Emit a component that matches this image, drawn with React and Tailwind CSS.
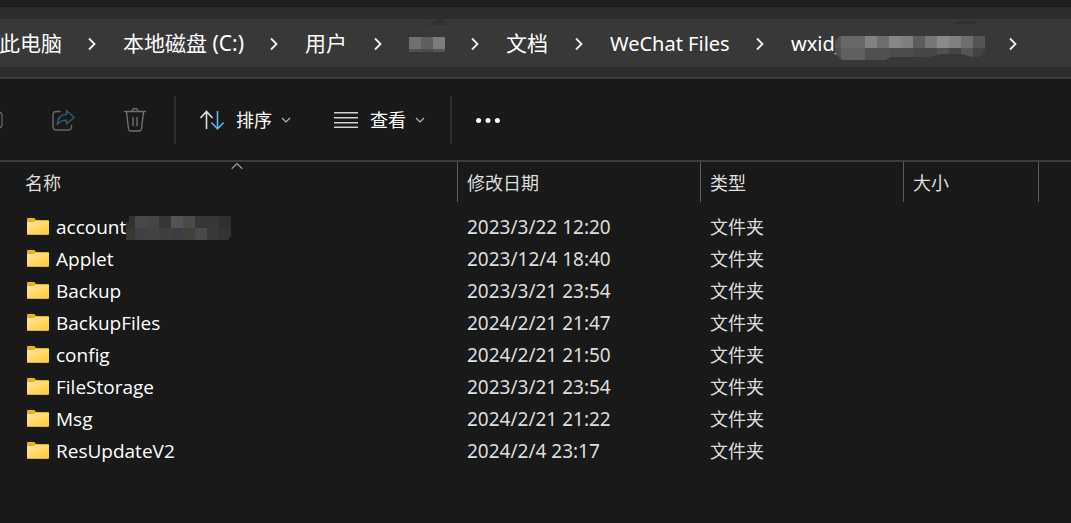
import React from "react";

const folders = [
  { name: "account", date: "2023/3/22 12:20", masked: true },
  { name: "Applet", date: "2023/12/4 18:40" },
  { name: "Backup", date: "2023/3/21 23:54" },
  { name: "BackupFiles", date: "2024/2/21 21:47" },
  { name: "config", date: "2024/2/21 21:50" },
  { name: "FileStorage", date: "2023/3/21 23:54" },
  { name: "Msg", date: "2024/2/21 21:22" },
  { name: "ResUpdateV2", date: "2024/2/4 23:17" },
];

const Mosaic = ({ rows, size = 12, lastHeight = 12, clip, className, children }) => {
  const width = rows[0].length * size;
  const height = (rows.length - 1) * size + lastHeight;
  return (
    <svg
      width={width}
      height={height}
      viewBox={`0 0 ${width} ${height}`}
      shapeRendering="crispEdges"
      aria-hidden="true"
      className={className}
    >
      {children}
      <g style={{ clipPath: clip }}>
        {rows.map((row, y) =>
          row.map((color, x) => (
            <rect
              key={`${x}-${y}`}
              x={x * size}
              y={y * size}
              width={size}
              height={y === rows.length - 1 ? lastHeight : size}
              fill={color}
            />
          ))
        )}
      </g>
    </svg>
  );
};

const UserMask = () => (
  <Mosaic
    className="overflow-visible"
    rows={[
      ["#707070", "#5f5f5f", "#7c7c7c"],
      ["#505050", "#4b4b4b", "#555555"],
    ]}
    lastHeight={3}
  >
    <path d="M17-12l7-3 5-3h5l5 6z" fill="#313131" />
  </Mosaic>
);

const WxidMask = () => (
  <Mosaic
    className="-ml-[15px] mt-2 shrink-0 overflow-visible"
    rows={[
      ["#555555", "#686868", "#686868", "#828282", "#6e6e6e", "#868686", "#7f7f7f", "#5c5c5c", "#777777", "#8a8a8a", "#808080", "#6e6e6e", "#555555"],
      ["#4d4d4d", "#606060", "#606060", "#505050", "#505050", "#4c4c4c", "#4c4c4c", "#474747", "#474747", "#505050", "#444444", "#555555", "#444444"],
    ]}
    clip="polygon(10px 0, 156px 0, 156px 15px, 150px 21px, 144px 21px, 132px 18px, 112px 18px, 100px 21px, 62px 21px, 56px 24px, 13px 24px, 6px 17px, 6px 6px)"
  >
    <path d="M120-12l6-1 2-2h17l4 3z" fill="#313131" />
  </Mosaic>
);

const AccountMask = () => (
  <Mosaic
    className="-ml-[3px] mt-0.5 shrink-0"
    rows={[
      ["#33302e", "#48484a", "#444546", "#383737", "#545456", "#4b4a4b", "#343639", "#373739", "#302e2e"],
      ["#383532", "#414143", "#434142", "#403e3f", "#3a3e43", "#42403c", "#49494c", "#37383a", "#363332"],
    ]}
    clip="polygon(6px 0, 108px 0, 108px 20px, 105px 24px, 3px 24px, 3px 6px, 6px 6px)"
  />
);

const Chevron = () => (
  <svg
    width="60"
    height="16"
    viewBox="0 0 60 16"
    fill="none"
    stroke="#f2f2f2"
    strokeWidth="1.8"
    className="mr-px shrink-0"
    aria-hidden="true"
  >
    <path d="M27 2.5l5.5 5.5L27 13.5" />
  </svg>
);

const SmallChevron = () => (
  <svg width="12" height="12" viewBox="0 0 12 12" fill="none" stroke="#b8b8b8" strokeWidth="1.2" className="ml-2" aria-hidden="true">
    <path d="M2 4l4 4 4-4" />
  </svg>
);

const RenameIcon = () => (
  <svg width="24" height="24" viewBox="0 0 24 24" fill="none" stroke="#666666" strokeWidth="1.3" aria-hidden="true">
    <path d="M15 4h4.5q3.5 0 3.5 3.5v9q0 3.5-3.5 3.5H15" />
  </svg>
);

const ShareIcon = () => (
  <svg width="24" height="24" viewBox="0 0 24 24" fill="none" strokeWidth="1.5" strokeLinejoin="round" strokeLinecap="round" aria-hidden="true">
    <path d="M9 3.5H5.5q-3.5 0-3.5 3.5v11.5Q2 22 5.5 22H17q3.5 0 3.5-3.5V17.500" stroke="#666666" />
    <path d="M15.5 2.5l7.500 7-7.500 6.500v-3.800c-4-.2-6.800.8-9.300 4.300.4-5.800 3.600-9.800 9.300-10.200z" stroke="#2f5a72" />
  </svg>
);

const TrashIcon = () => (
  <svg width="24" height="24" viewBox="0 0 24 24" fill="none" stroke="#707070" strokeWidth="1.4" strokeLinecap="round" strokeLinejoin="round" aria-hidden="true">
    <path d="M1.5 3.5h21M3.5 3.500l2 17.500q.3 2 2.300 2h8.400q2 0 2.300-2l2-17.500M9 3.500a3 3 0 0 1 6 0M10 9.500v8M14 9.500v8" />
  </svg>
);

const SortIcon = () => (
  <svg width="24" height="24" viewBox="0 0 24 24" fill="none" strokeWidth="1.6" aria-hidden="true">
    <path d="M6.500 21V3.500M.5 10l6-6.500 6 6.500" stroke="#dedede" />
    <path d="M17.500 3v18M11.300 14.500l6.200 6.300 6.200-6.300" stroke="#55b8ee" />
  </svg>
);

const ViewIcon = () => (
  <svg width="24" height="24" viewBox="0 0 24 24" stroke="#d2d2d2" strokeWidth="1.4" aria-hidden="true">
    <path d="M0 4.700h24M0 9.700h24M0 14.700h24M0 19.300h24" />
  </svg>
);

const FolderIcon = () => (
  <svg width="24" height="20" viewBox="0 0 24 20" className="shrink-0" aria-hidden="true">
    <defs>
      <linearGradient id="folder" x1="0" y1="0" x2="1" y2="1">
        <stop offset="0" stopColor="#ffe8a3" />
        <stop offset="1" stopColor="#fdc937" />
      </linearGradient>
    </defs>
    <path d="M1 2q0-1 1-1h5.500q1 0 1.500.7L10 3H22q1 0 1 1v4H1z" fill="#f0b01e" />
    <path d="M1 5.500q0-.5.500-.5H8l1.500-1H22.500q.5 0 .5.500V17q0 1-1 1H2q-1 0-1-1z" fill="#dca73a" />
    <path d="M1 5.500q0-.5.500-.5H8l1.500-1H22.500q.5 0 .5.500v11.700q0 1-1 1H2q-1 0-1-1z" fill="url(#folder)" />
  </svg>
);

const Divider = () => <div className="h-12 w-0.5 shrink-0 bg-[#303030]" />;

const Breadcrumbs = () => (
  <nav
    aria-label="路径"
    className="flex h-12 items-center overflow-hidden bg-[#383838] pt-0.5 text-xl whitespace-nowrap text-white"
  >
    <a href="#pc" className="-ml-px text-[21px]">此电脑</a>
    <Chevron />
    <a href="#c" className="w-[121px] text-[21px]">本地磁盘 (C:)</a>
    <Chevron />
    <a href="#users" className="w-[43px] text-[21px]">用户</a>
    <Chevron />
    <a href="#user" aria-label="用户文件夹"><UserMask /></a>
    <Chevron />
    <a href="#documents" className="w-[43px] text-[21px]">文档</a>
    <Chevron />
    <a href="#wechat" className="w-[120px]">WeChat Files</a>
    <Chevron />
    <a href="#wxid" className="flex w-48 items-center">
      wxid_
      <WxidMask />
    </a>
    <Chevron />
  </nav>
);

const Toolbar = () => (
  <div className="flex h-[83px] items-center border-b-2 border-[#3c3c3c] text-lg text-white">
    <button disabled aria-label="重命名" className="-ml-[21px]"><RenameIcon /></button>
    <button disabled aria-label="共享" className="ml-12"><ShareIcon /></button>
    <button disabled aria-label="删除" className="mr-[27px] ml-12"><TrashIcon /></button>
    <Divider />
    <button className="ml-6 flex items-center">
      <SortIcon />
      <span className="ml-3">排序</span>
      <SmallChevron />
    </button>
    <button className="mr-6 ml-[42px] flex items-center">
      <ViewIcon />
      <span className="ml-3">查看</span>
      <SmallChevron />
    </button>
    <Divider />
    <button aria-label="更多" className="ml-6">
      <svg width="24" height="24" viewBox="0 0 24 24" fill="#ffffff" aria-hidden="true">
        <circle cx="2.6" cy="12.5" r="2.5" />
        <circle cx="12" cy="12.5" r="2.5" />
        <circle cx="21.4" cy="12.5" r="2.5" />
      </svg>
    </button>
  </div>
);

const HeaderCell = ({ children, sorted }) => (
  <th className="h-[49px] p-0 text-left align-top font-normal">
    <div className="h-10 border-r border-[#5c5c5c]">
      <button className={sorted ? "relative ml-4 h-10 w-[calc(100%-16px)] px-[9px] pt-0.5 text-left" : "h-10 w-full px-[9px] pt-0.5 text-left"}>
        {sorted && (
          <svg width="12" height="8" viewBox="0 0 12 8" fill="none" stroke="#a0a0a0" strokeWidth="1.2" className="absolute top-0 left-1/2 -translate-x-1/2" aria-hidden="true">
            <path d="M.7 6.700L6 1.500l5.300 5.200" />
          </svg>
        )}
        {children}
      </button>
    </div>
  </th>
);

const FileTable = () => (
  <table className="w-full table-fixed border-separate border-spacing-0 text-lg whitespace-nowrap text-[#dedede]">
    <colgroup>
      <col className="w-[458px]" />
      <col className="w-[243px]" />
      <col className="w-[203px]" />
      <col className="w-[135px]" />
      <col />
    </colgroup>
    <thead>
      <tr>
        <HeaderCell sorted>名称</HeaderCell>
        <HeaderCell>修改日期</HeaderCell>
        <HeaderCell>类型</HeaderCell>
        <HeaderCell>大小</HeaderCell>
        <td />
      </tr>
    </thead>
    <tbody>
      {folders.map((folder) => (
        <tr key={folder.name} className="h-8">
          <td className="p-0 pl-[26px]">
            <div className="flex items-center">
              <FolderIcon />
              <a href={`#${folder.name}`} className="ml-1.5 font-['Open_Sans',sans-serif] text-[19px] leading-8 text-white">{folder.name}</a>
              {folder.masked && <AccountMask />}
            </div>
          </td>
          <td className="p-0 pl-[9px] text-[19px] leading-8">{folder.date}</td>
          <td className="p-0 pl-[9px] leading-8">文件夹</td>
          <td />
          <td />
        </tr>
      ))}
    </tbody>
  </table>
);

const App = () => {
  return (
    <div className="min-h-screen overflow-x-hidden bg-[#191919] font-['Noto_Sans','Noto_Sans_CJK_SC',sans-serif]">
      <div className="h-[7px] border-b-2 border-[#1c1c1c] bg-[#202020]" />
      <header className="border-b-2 border-[#3c3c3c] bg-[#2c2c2c] pt-3 pb-2.5">
        <Breadcrumbs />
      </header>
      <Toolbar />
      <FileTable />
    </div>
  );
};

export default App;
